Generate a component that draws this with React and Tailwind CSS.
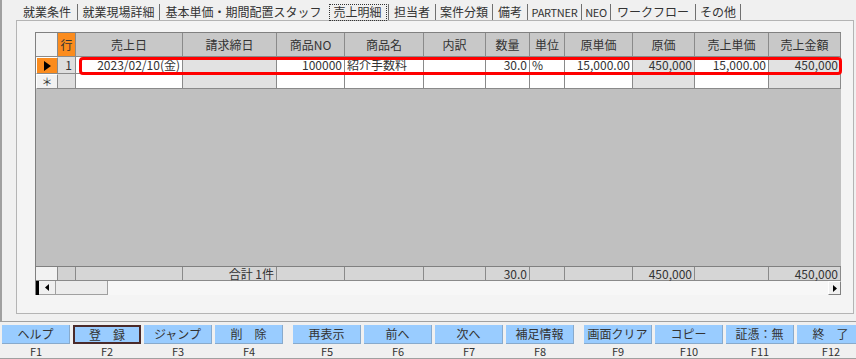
const tabs = [
  { label: '就業条件', w: 'w-[61px]' },
  { label: '就業現場詳細', w: 'w-[82px]' },
  { label: '基本単価・期間配置スタッフ', w: 'w-[167px]', noSep: true },
  { label: '売上明細', w: 'w-[62px]', active: true },
  { label: '担当者', w: 'w-[47px]' },
  { label: '案件分類', w: 'w-[57px]' },
  { label: '備考', w: 'w-[35px]' },
  { label: 'PARTNER', w: 'w-[54px]', small: true },
  { label: 'NEO', w: 'w-[29px]', small: true },
  { label: 'ワークフロー', w: 'w-[85px]' },
  { label: 'その他', w: 'w-[45px]' },
];

const cols =
  'grid grid-cols-[22px_18px_107px_94px_68px_79px_62px_44px_35px_68px_62px_74px_72px]';

const headers = ['売上日', '請求締日', '商品NO', '商品名', '内訳', '数量', '単位', '原単価', '原価', '売上単価', '売上金額'];

// ro = read-only (gray) column
const row1 = [
  { v: '2023/02/10(金)', r: true },
  { v: '', ro: true },
  { v: '100000', r: true },
  { v: '紹介手数料' },
  { v: '' },
  { v: '30.0', r: true },
  { v: '%' },
  { v: '15,000.00', r: true },
  { v: '450,000', r: true, ro: true },
  { v: '15,000.00', r: true },
  { v: '450,000', r: true, ro: true },
];

const footer = ['', '合計 1件', '', '', '', '30.0', '', '', '450,000', '', '450,000'];

const groups = [
  [['ヘルプ', 'F1'], ['登　録', 'F2', true], ['ジャンプ', 'F3'], ['削　除', 'F4']],
  [['再表示', 'F5'], ['前へ', 'F6'], ['次へ', 'F7'], ['補足情報', 'F8']],
  [['画面クリア', 'F9'], ['コピー', 'F10'], ['証憑：無', 'F11'], ['終　了', 'F12']],
];

function Cell({ children, className = '' }) {
  return (
    <div className={`flex items-center whitespace-nowrap border-r border-b border-[#8a8a8a] ${className}`}>
      {children}
    </div>
  );
}

function Grid() {
  return (
    <div className="relative flex h-[263px] w-[806px] flex-col border-l border-t border-[#808080] bg-[#c0c0c0] text-[12px] leading-[12px] text-[#333]">
      {/* header */}
      <div className={`${cols} h-[24px]`}>
        <Cell className="bg-[#f2f2f2]" />
        <Cell className="justify-center bg-[#fb8c1e]">行</Cell>
        {headers.map((h) => (
          <Cell key={h} className="justify-center bg-[#c8c8c8]">{h}</Cell>
        ))}
      </div>
      {/* row 1 */}
      <div className={`${cols} h-[17px]`}>
        <Cell className="justify-center border-t border-l border-t-white border-l-white bg-[#fb8c1e]">
          <svg width="7" height="10" viewBox="0 0 7 10"><polygon points="0,0 7,5 0,10" fill="#000" /></svg>
        </Cell>
        <Cell className="justify-end bg-[#dedede] pr-[3px]">1</Cell>
        {row1.map((c, i) => (
          <Cell key={i} className={`${c.ro ? 'bg-[#e2e2e2]' : 'bg-white'} ${c.r ? 'justify-end pr-[2px]' : 'pl-[2px]'}`}>
            {c.v}
          </Cell>
        ))}
      </div>
      {/* new row */}
      <div className={`${cols} h-[15px]`}>
        <Cell className="justify-center border-t border-l border-t-white border-l-white bg-[#f2f2f2] text-[11px] leading-[11px]">＊</Cell>
        <Cell className="bg-[#dedede]" />
        {row1.map((c, i) => (
          <Cell key={i} className={c.ro ? 'bg-[#e2e2e2]' : 'bg-white'} />
        ))}
      </div>
      <div className="flex-1" />
      {/* footer */}
      <div className={`${cols} h-[15px] border-t border-[#808080]`}>
        <Cell className="bg-[#f2f2f2]" />
        <Cell className="bg-[#d2d2d2]" />
        {footer.map((f, i) => (
          <Cell key={i} className="justify-end bg-[#d6d6d6] pr-[2px]">{f}</Cell>
        ))}
      </div>
      {/* horizontal scrollbar */}
      <div className="flex h-[14px] bg-[#f7f7f7]">
        <div className="w-[3px] bg-black" />
        <div className="flex w-[17px] items-center justify-center border-r border-b border-[#a0a0a0] bg-[#f0f0f0]">
          <svg width="4" height="7" viewBox="0 0 4 7"><polygon points="4,0 0,3.5 4,7" fill="#000" /></svg>
        </div>
        <div className="w-[52px] border-r border-b border-[#a0a0a0] bg-[#ececec]" />
        <div className="flex-1" />
        <div className="flex w-[13px] items-center justify-center border border-t-white border-l-white border-r-[#808080] border-b-[#808080] bg-[#f0f0f0]">
          <svg width="4" height="7" viewBox="0 0 4 7"><polygon points="0,0 4,3.5 0,7" fill="#000" /></svg>
        </div>
      </div>
      {/* highlight of the edited row */}
      <div className="pointer-events-none absolute left-[43px] top-[24px] h-[18px] w-[763px] rounded-[4px] border-[3px] border-[#ff0000]" />
    </div>
  );
}

export default function App() {
  return (
    <div className="h-[359px] w-[856px] overflow-hidden bg-[#f0f0f0] font-['Noto_Sans_CJK_JP',sans-serif] leading-none">
      <div className="h-[322px] border-b border-l-2 border-[#a0a0a0] pt-[4px]">
        {/* tabs */}
        <div className="ml-[15px] flex h-[16px] text-[12px] leading-[12px] text-[#333]">
          {tabs.map((t) => (
            <div
              key={t.label}
              className={`flex items-center justify-center ${t.w} ${t.small ? 'text-[11px] tracking-[-0.3px]' : ''} ${t.noSep ? '' : 'border-r border-[#707070]'}`}
            >
              {t.active ? (
                <span className="flex h-[17px] w-[58px] items-center justify-center border border-dotted border-[#333]">{t.label}</span>
              ) : (
                t.label
              )}
            </div>
          ))}
        </div>
        {/* panel */}
        <div className="ml-[14px] h-[294px] w-[838px] border border-[#b4b4b4] bg-[#f4f4f4] pl-[18px] pt-[11px]">
          <Grid />
        </div>
      </div>
      {/* function keys */}
      <div className="flex gap-[10px] border-b border-[#a0a0a0] pl-[2px] pt-[3px]">
        {groups.map((g, gi) => (
          <div key={gi} className="flex gap-[3px]">
            {g.map(([label, key, focus]) => (
              <div key={key} className="flex w-[68px] flex-col items-center">
                <div
                  className={`flex h-[19px] w-full items-center justify-center bg-[#99ccff] text-[12px] leading-[12px] text-[#333] ${
                    focus ? 'border-2 border-[#4a2a2a]' : 'border-b border-r border-[#88aacc]'
                  }`}
                >
                  {label}
                </div>
                <div className="h-[14px] text-center text-[11px] leading-[14px] text-[#333]">{key}</div>
              </div>
            ))}
          </div>
        ))}
      </div>
    </div>
  );
}
